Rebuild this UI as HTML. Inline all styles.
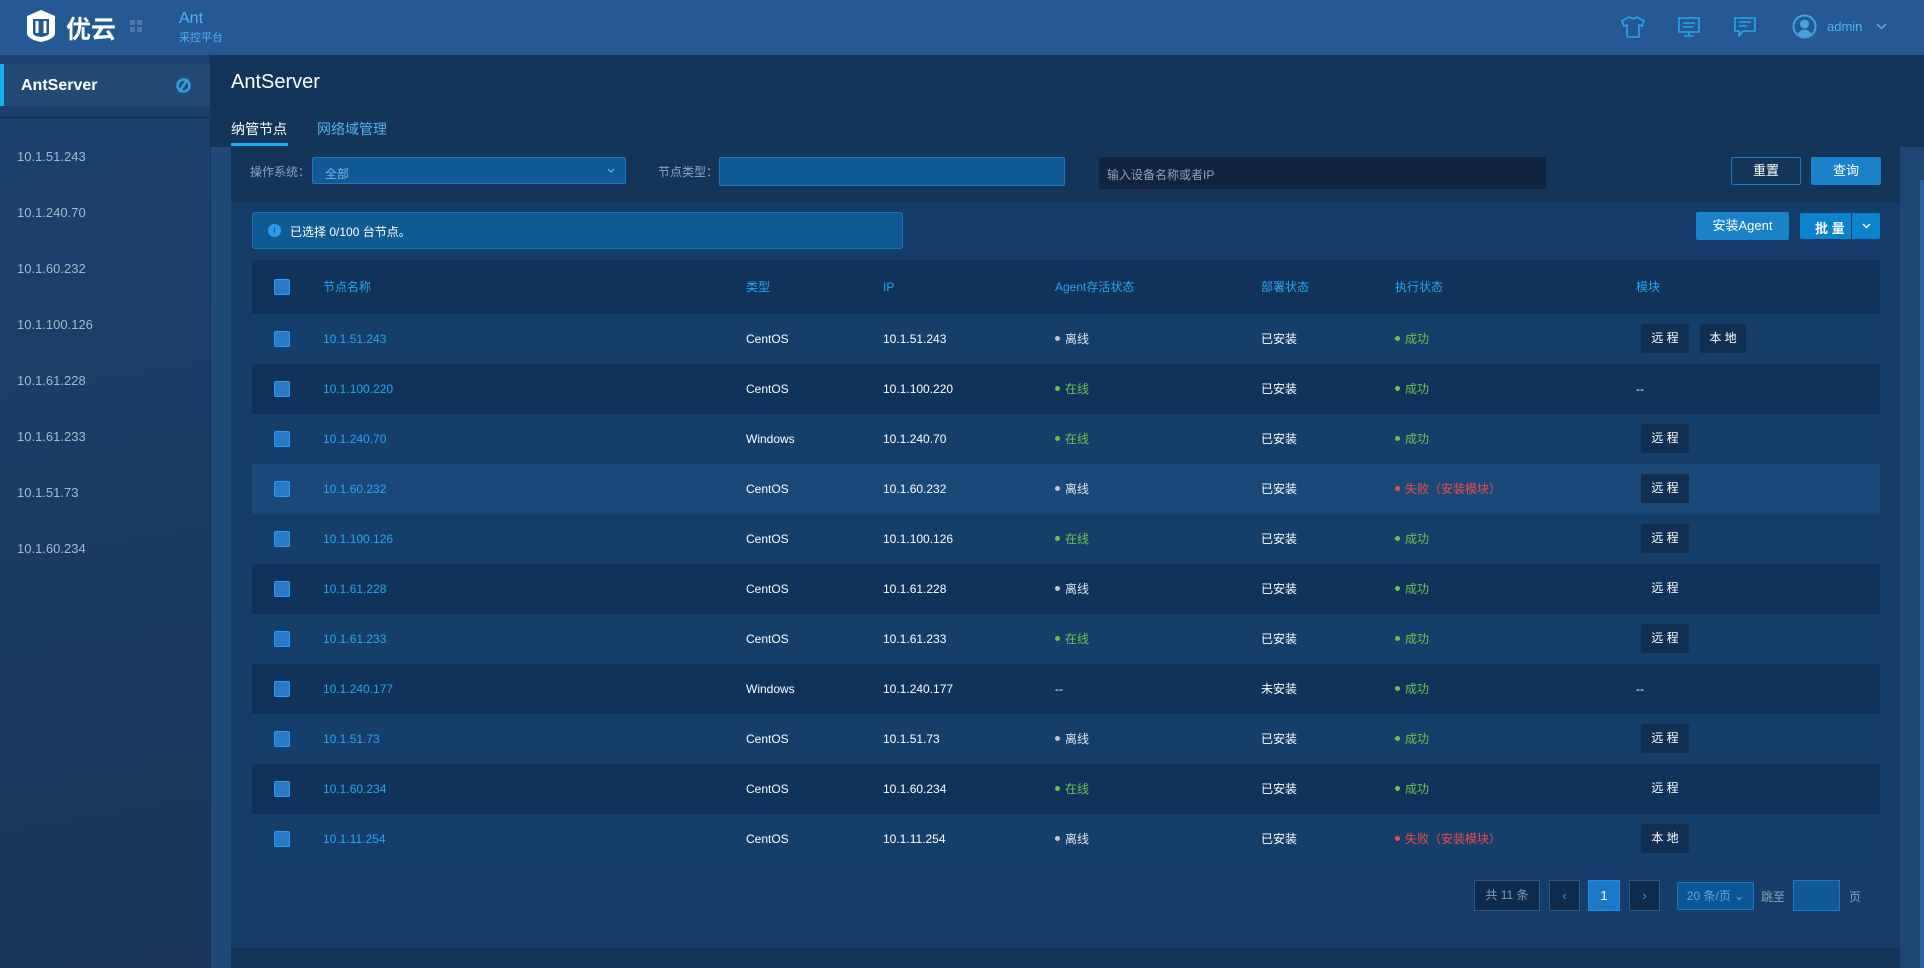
<!DOCTYPE html>
<html><head><meta charset="utf-8"><style>
*{margin:0;padding:0;box-sizing:border-box}
body{width:1924px;height:968px;overflow:hidden;background:#1b3b64;font-family:"Liberation Sans","Noto Sans CJK SC",sans-serif;position:relative;color:#fff}
.a{position:absolute}
.hdr{left:0;top:0;width:1924px;height:55px;background:#245993}
.side{left:0;top:55px;width:210px;height:913px;background:linear-gradient(170deg,#1c4170,#1a3557)}
.main{left:210px;top:55px;width:1714px;height:913px;background:#15345a}
.si{left:17px;font-size:13px;color:#a3b9d2}
.cell{position:absolute;font-size:12px;line-height:50px;white-space:nowrap}
.cb{position:absolute;left:274px;width:16px;height:16px;background:#2879c8;border:1px solid #2b9af0;border-radius:2px}
.btn{position:absolute;height:29px;line-height:29px;font-size:12px;text-align:center;background:#112f52;border-radius:2px;color:#fff}
.dot{display:inline-block;width:5px;height:5px;border-radius:50%;margin-right:5px;vertical-align:middle;position:relative;top:-1px}
.g{color:#6cc24a}.r{color:#f04a4a}.w{color:#dfe6ee}
</style></head><body>
<div class="a hdr">
 <svg class="a" style="left:25px;top:9px" width="32" height="34" viewBox="0 0 32 34"><path d="M16 1 L30 7 V24 Q30 30 16 33 Q2 30 2 24 V7 Z" fill="#fff"/><path d="M8 10 H24 V24 Q24 27 16 28 Q8 27 8 24 Z" fill="#245993"/><path d="M12 12 V24 M20 12 V24" stroke="#fff" stroke-width="3"/></svg>
 <div class="a" style="left:66px;top:10px;font-size:25px;font-weight:bold">优云</div>
 <div class="a" style="left:130px;top:20px;width:5px;height:5px;background:#4f7aa8;box-shadow:7px 0 #4f7aa8,0 7px #4f7aa8,7px 7px #4f7aa8"></div>
 <div class="a" style="left:179px;top:10px;font-size:16px;color:#4fb2f0">Ant</div>
 <div class="a" style="left:179px;top:29px;font-size:11px;color:#4fb2f0">采控平台</div>
 <svg class="a" style="left:1621px;top:16px" width="24" height="22" viewBox="0 0 24 22" fill="none" stroke="#2aa4ea" stroke-width="1.6"><path d="M8 1 Q12 4 16 1 L23 5 L21 10 L18 9 V21 H6 V9 L3 10 L1 5 Z"/></svg>
 <svg class="a" style="left:1678px;top:17px" width="22" height="20" viewBox="0 0 22 20" fill="none" stroke="#2aa4ea" stroke-width="1.6"><rect x="1" y="1" width="20" height="14"/><path d="M5 6H17M5 10H15M11 15V19M6 19H16"/></svg>
 <svg class="a" style="left:1734px;top:17px" width="22" height="20" viewBox="0 0 22 20" fill="none" stroke="#2aa4ea" stroke-width="1.6"><path d="M1 1H21V14H9L5 19V14H1Z M5 5H17M5 9H13"/></svg>
 <svg class="a" style="left:1792px;top:14px" width="25" height="25" viewBox="0 0 25 25"><circle cx="12.5" cy="12.5" r="11" fill="none" stroke="#4aa0dc" stroke-width="2"/><circle cx="12.5" cy="10" r="4.5" fill="#4aa0dc"/><path d="M5 20 Q12.5 11 20 20 Q12.5 25 5 20Z" fill="#4aa0dc"/></svg>
 <div class="a" style="left:1827px;top:19px;font-size:13px;color:#4fb2f0">admin</div>
 <svg class="a" style="left:1876px;top:23px" width="11" height="7" viewBox="0 0 11 7" fill="none" stroke="#4fb2f0" stroke-width="1.5"><path d="M1 1L5.5 5.5L10 1"/></svg>
</div>
<div class="a side">
 <div class="a" style="left:0;top:9px;width:210px;height:42px;background:#234a74;border-left:4px solid #17b0f0"></div>
 <div class="a" style="left:21px;top:22px;font-size:16px;font-weight:bold">AntServer</div>
 <svg class="a" style="left:175px;top:22px" width="17" height="17" viewBox="0 0 17 17" fill="none" stroke="#2fa0e0" stroke-width="2.5"><circle cx="8.5" cy="8.5" r="6"/><path d="M13 2L4 15"/></svg>
 <div class="a" style="left:0;top:62px;width:210px;height:1px;background:#122a48"></div>
 <div class="a si" style="top:94px">10.1.51.243</div>
 <div class="a si" style="top:150px">10.1.240.70</div>
 <div class="a si" style="top:206px">10.1.60.232</div>
 <div class="a si" style="top:262px">10.1.100.126</div>
 <div class="a si" style="top:318px">10.1.61.228</div>
 <div class="a si" style="top:374px">10.1.61.233</div>
 <div class="a si" style="top:430px">10.1.51.73</div>
 <div class="a si" style="top:486px">10.1.60.234</div>
</div>
<div class="a main"></div>
<div class="a" style="left:231px;top:71px;font-size:20px">AntServer</div>
<div class="a" style="left:231px;top:119px;font-size:14px">纳管节点</div>
<div class="a" style="left:231px;top:143px;width:57px;height:3px;background:#17b0f0"></div>
<div class="a" style="left:317px;top:119px;font-size:14px;color:#4fb2f0">网络域管理</div>
<div class="a" style="left:211px;top:147px;width:20px;height:821px;background:#1d4878"></div>
<div class="a" style="left:1900px;top:147px;width:24px;height:821px;background:#1d4575"></div>
<div class="a" style="left:1920px;top:180px;width:4px;height:788px;background:#2a62a0"></div>
<div class="a" style="left:231px;top:202px;width:1669px;height:746px;background:#163c69"></div>
<div class="a" style="left:250px;top:163px;font-size:12px;color:#8aa4c0">操作系统：</div>
<div class="a" style="left:312px;top:157px;width:314px;height:27px;background:#0f5a94;border:1px solid #1c78c4;border-radius:2px;font-size:12px;color:#7ab4e6;padding:7px 12px">全部</div>
<svg class="a" style="left:607px;top:168px" width="8" height="5" viewBox="0 0 8 5" fill="none" stroke="#7ab4e6"><path d="M1 1L4 4L7 1"/></svg>
<div class="a" style="left:658px;top:163px;font-size:12px;color:#8aa4c0">节点类型：</div>
<div class="a" style="left:719px;top:157px;width:346px;height:29px;background:#0f5a94;border:1px solid #1c78c4;border-radius:2px"></div>
<div class="a" style="left:1099px;top:157px;width:447px;height:32px;background:#10233f;border-radius:2px;font-size:12px;color:#8aa4c0;padding:9px 8px">输入设备名称或者IP</div>
<div class="a" style="left:1731px;top:157px;width:70px;height:28px;border:1px solid #1a7cc8;border-radius:2px;font-size:13px;text-align:center;line-height:26px">重置</div>
<div class="a" style="left:1811px;top:157px;width:70px;height:28px;background:#1a82c8;border-radius:2px;font-size:13px;text-align:center;line-height:28px">查询</div>
<div class="a" style="left:252px;top:212px;width:651px;height:37px;background:#0f5a92;border:1px solid #2070b4;border-radius:3px"></div>
<div class="a" style="left:268px;top:224px;width:13px;height:13px;border-radius:50%;background:#2a9af0;font-size:9px;text-align:center;line-height:13px;color:#0f5a92;font-weight:bold">i</div>
<div class="a" style="left:290px;top:223px;font-size:12px">已选择 0/100 台节点。</div>
<div class="a" style="left:1696px;top:212px;width:93px;height:28px;background:#1a82c8;border-radius:2px;font-size:13px;text-align:center;line-height:28px">安装Agent</div>
<div class="a" style="left:1800px;top:213px;width:80px;height:26px;background:#0a84cc;border-radius:2px"></div>
<div class="a" style="left:1851px;top:213px;width:1px;height:26px;background:#0d3a6a"></div>
<div class="a" style="left:1815px;top:218px;font-size:13px;font-weight:bold">批 量</div>
<svg class="a" style="left:1862px;top:223px" width="9" height="6" viewBox="0 0 9 6" fill="none" stroke="#fff" stroke-width="1.4"><path d="M1 1L4.5 4.5L8 1"/></svg>

<div class="a" style="left:252px;top:260px;width:1628px;height:54px;background:#11325a"></div>
<div class="cb" style="top:279px"></div>
<div class="cell" style="top:262px;left:323px;color:#27a6ee">节点名称</div>
<div class="cell" style="top:262px;left:746px;color:#27a6ee">类型</div>
<div class="cell" style="top:262px;left:883px;color:#27a6ee">IP</div>
<div class="cell" style="top:262px;left:1055px;color:#27a6ee">Agent存活状态</div>
<div class="cell" style="top:262px;left:1261px;color:#27a6ee">部署状态</div>
<div class="cell" style="top:262px;left:1395px;color:#27a6ee">执行状态</div>
<div class="cell" style="top:262px;left:1636px;color:#27a6ee">模块</div>

<div id="rows"></div>
<script>
var R=[["10.1.51.243","CentOS",0,"已安装",1,"rl"],["10.1.100.220","CentOS",1,"已安装",1,"-"],["10.1.240.70","Windows",1,"已安装",1,"r"],["10.1.60.232","CentOS",0,"已安装",0,"r"],["10.1.100.126","CentOS",1,"已安装",1,"r"],["10.1.61.228","CentOS",0,"已安装",1,"t"],["10.1.61.233","CentOS",1,"已安装",1,"r"],["10.1.240.177","Windows",2,"未安装",1,"-"],["10.1.51.73","CentOS",0,"已安装",1,"r"],["10.1.60.234","CentOS",1,"已安装",1,"t"],["10.1.11.254","CentOS",0,"已安装",0,"l"]];
var h="";
R.forEach(function(r,i){var t=314+i*50;var bg=i==3?"#1a4878":(i%2?"#11325a":"#163e6b");
h+='<div class="a" style="left:252px;top:'+t+'px;width:1628px;height:50px;background:'+bg+'"></div>';
h+='<div class="cb" style="top:'+(t+17)+'px"></div>';
h+='<div class="cell" style="top:'+t+'px;left:323px;color:#27a6ee">'+r[0]+'</div>';
h+='<div class="cell" style="top:'+t+'px;left:746px">'+r[1]+'</div>';
h+='<div class="cell" style="top:'+t+'px;left:883px">'+r[0]+'</div>';
var ag=r[2]==0?'<span class="w"><span class="dot" style="background:#c0c8d2"></span>离线</span>':r[2]==1?'<span class="g"><span class="dot" style="background:#6cc24a"></span>在线</span>':'--';
h+='<div class="cell" style="top:'+t+'px;left:1055px">'+ag+'</div>';
h+='<div class="cell" style="top:'+t+'px;left:1261px">'+r[3]+'</div>';
var ex=r[4]?'<span class="g"><span class="dot" style="background:#6cc24a"></span>成功</span>':'<span class="r"><span class="dot" style="background:#f04a4a"></span>失败（安装模块）</span>';
h+='<div class="cell" style="top:'+t+'px;left:1395px">'+ex+'</div>';
var m=r[5];
if(m=="rl"){h+='<div class="btn" style="top:'+(t+10)+'px;left:1641px;width:48px">远 程</div><div class="btn" style="top:'+(t+10)+'px;left:1700px;width:46px">本 地</div>';}
else if(m=="r"){h+='<div class="btn" style="top:'+(t+10)+'px;left:1641px;width:48px">远 程</div>';}
else if(m=="l"){h+='<div class="btn" style="top:'+(t+10)+'px;left:1641px;width:48px">本 地</div>';}
else if(m=="t"){h+='<div class="btn" style="top:'+(t+10)+'px;left:1641px;width:48px;background:none">远 程</div>';}
else h+='<div class="cell" style="top:'+t+'px;left:1636px">--</div>';
});
document.getElementById("rows").innerHTML=h;
</script>

<div class="a" style="left:1474px;top:880px;width:66px;height:31px;background:#0f2a4c;border:1px solid #2a5888;font-size:12px;color:#7a9cc0;text-align:center;line-height:29px">共 11 条</div>
<div class="a" style="left:1549px;top:880px;width:31px;height:31px;background:#0f2a4c;border:1px solid #2a5888;font-size:13px;color:#2a9af0;text-align:center;line-height:29px">&lsaquo;</div>
<div class="a" style="left:1588px;top:880px;width:32px;height:31px;background:#1c78c8;border:1px solid #2a8ae0;font-size:13px;text-align:center;line-height:29px">1</div>
<div class="a" style="left:1629px;top:880px;width:31px;height:31px;background:#0f2a4c;border:1px solid #2a5888;font-size:13px;color:#2a9af0;text-align:center;line-height:29px">&rsaquo;</div>
<div class="a" style="left:1677px;top:882px;width:77px;height:28px;background:#0c5696;border:1px solid #1c76c0;border-radius:2px;font-size:12px;color:#5aa8e8;text-align:center;line-height:26px">20 条/页 ⌄</div>
<div class="a" style="left:1761px;top:888px;font-size:12px;color:#8aa4c0">跳至</div>
<div class="a" style="left:1793px;top:880px;width:47px;height:31px;background:#0f5a94;border:1px solid #1c78c4"></div>
<div class="a" style="left:1849px;top:888px;font-size:12px;color:#8aa4c0">页</div>
</body></html>
